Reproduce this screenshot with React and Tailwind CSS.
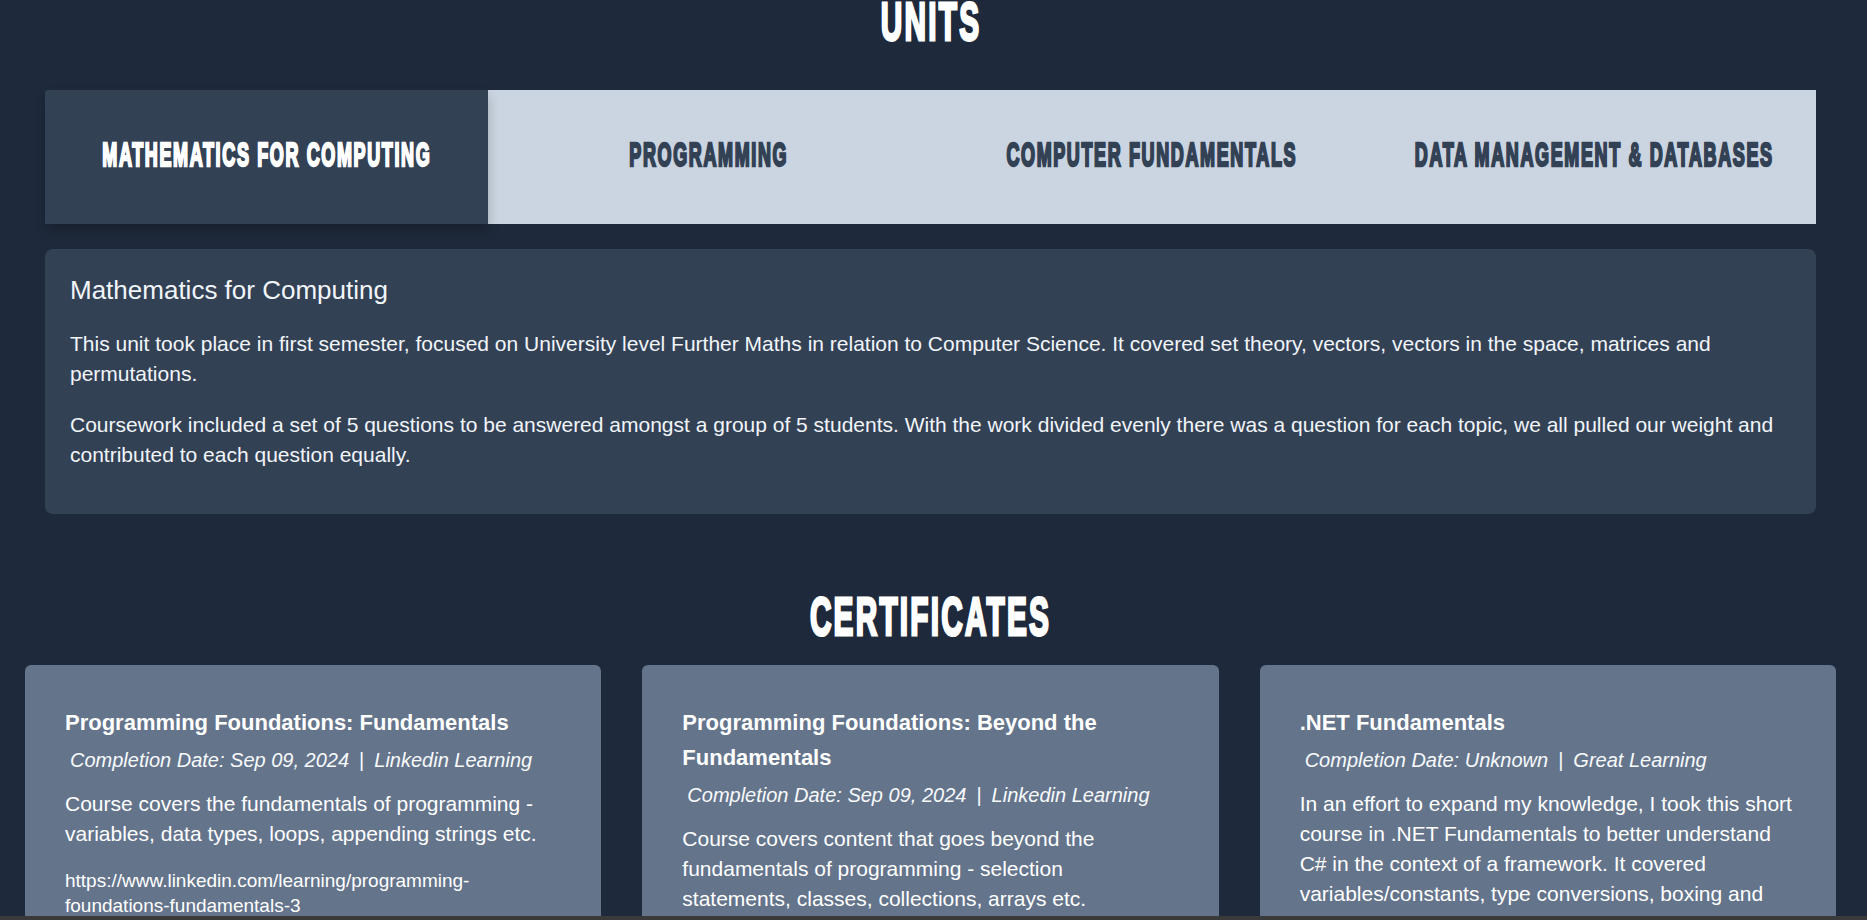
import React from "react";

const tabs = [
  "MATHEMATICS FOR COMPUTING",
  "PROGRAMMING",
  "COMPUTER FUNDAMENTALS",
  "DATA MANAGEMENT & DATABASES",
];

const certs = [
  {
    title: "Programming Foundations: Fundamentals",
    date: "Sep 09, 2024",
    provider: "Linkedin Learning",
    desc: [
      "Course covers the fundamentals of programming -",
      "variables, data types, loops, appending strings etc.",
    ],
    link: "https://www.linkedin.com/learning/programming-foundations-fundamentals-3",
  },
  {
    title: "Programming Foundations: Beyond the Fundamentals",
    date: "Sep 09, 2024",
    provider: "Linkedin Learning",
    desc: [
      "Course covers content that goes beyond the",
      "fundamentals of programming - selection",
      "statements, classes, collections, arrays etc.",
    ],
    link: "https://www.linkedin.com/learning/programming-foundations-beyond-the-fundamentals",
  },
  {
    title: ".NET Fundamentals",
    date: "Unknown",
    provider: "Great Learning",
    desc: [
      "In an effort to expand my knowledge, I took this short",
      "course in .NET Fundamentals to better understand",
      "C# in the context of a framework. It covered",
      "variables/constants, type conversions, boxing and",
      "unboxing, and more.",
    ],
    link: "https://www.mygreatlearning.com/academy/learn-for-free/courses/net-fundamentals",
  },
];

function BigHeading({ children, className }) {
  return (
    <h2 className={`flex justify-center ${className}`}>
      <span className="inline-block origin-center scale-x-[0.552] whitespace-nowrap text-[54px] font-bold leading-none tracking-[4px] text-white [-webkit-text-stroke:3px_currentColor]">
        {children}
      </span>
    </h2>
  );
}

export default function App() {
  return (
    <div className="min-h-screen overflow-hidden bg-[#1e293b] text-white [font-family:'Liberation_Sans',Arial,sans-serif]">
      <section className="pl-[45px] pr-[51px]">
        <BigHeading className="-mt-[6px]">UNITS</BigHeading>

        <div className="mt-[42px] grid h-[134px] grid-cols-4">
          {tabs.map((t, i) => (
            <div
              key={t}
              className={
                i === 0
                  ? "relative z-10 flex items-center justify-center overflow-hidden rounded-tl-[3px] bg-[#334155] pb-[6px] text-white shadow-[0_6px_12px_rgba(0,0,0,0.22)]"
                  : "flex items-center justify-center overflow-hidden bg-[#cbd5e1] pb-[6px] text-[#334155]"
              }
            >
              <span className="inline-block origin-center scale-x-[0.545] whitespace-nowrap text-[33px] font-bold leading-none tracking-[3px] [-webkit-text-stroke:2.5px_currentColor]">
                {t}
              </span>
            </div>
          ))}
        </div>

        <div className="mt-[25px] rounded-lg bg-[#334155] px-[25px] pb-[23px] pt-[26px] text-[#f1f5f9]">
          <h3 className="mb-[23px] text-[26px] leading-[31px]">Mathematics for Computing</h3>
          <p className="mb-[21px] text-[21px] leading-[30px]">
            This unit took place in first semester, focused on University level Further Maths in relation to Computer
            Science. It covered set theory, vectors, vectors in the space, matrices and permutations.
          </p>
          <p className="mb-[21px] text-[21px] leading-[30px]">
            Coursework included a set of 5 questions to be answered amongst a group of 5 students. With the work
            divided evenly there was a question for each topic, we all pulled our weight and contributed to each
            question equally.
          </p>
        </div>
      </section>

      <section className="pl-[25px] pr-[31px]">
        <BigHeading className="mt-[75px]">CERTIFICATES</BigHeading>

        <div className="mt-[22px] grid grid-cols-3 gap-[41px]">
          {certs.map((c) => (
            <div key={c.title} className="rounded-md bg-[#64748b] px-[40px] pb-[40px] pt-[40px] text-white">
              <h4 className="text-[22px] font-bold leading-[35px]">{c.title}</h4>
              <div className="mb-[14px] mt-[5px] pl-[5px] text-[20px] italic leading-[30px] text-[#f8fafc]">
                <span>Completion Date: {c.date}</span>
                <span className="mx-[10px] not-italic">|</span>
                <span>{c.provider}</span>
              </div>
              <p className="mb-[19px] whitespace-nowrap text-[21px] leading-[30px]">
                {c.desc.map((line, idx) => (
                  <React.Fragment key={idx}>
                    {idx > 0 && <br />}
                    {line}
                  </React.Fragment>
                ))}
              </p>
              <a className="block text-[19px] leading-[25px] text-white" href="#">
                {c.link}
              </a>
            </div>
          ))}
        </div>
      </section>

      <div className="fixed inset-x-0 bottom-0 h-[4px] bg-[#3a3a3a]" />
    </div>
  );
}
